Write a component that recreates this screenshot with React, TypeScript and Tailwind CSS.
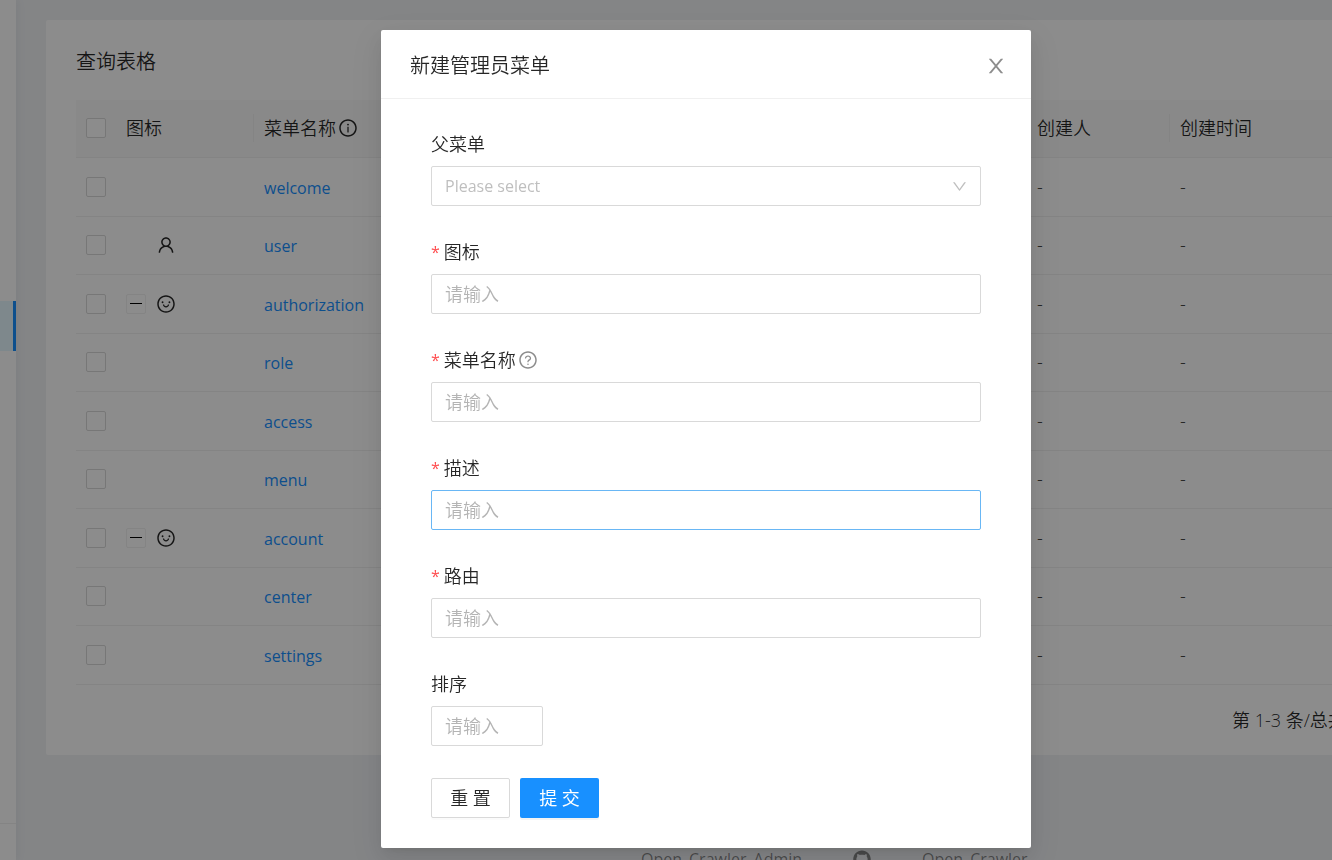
import { useState } from "react";
import {
  AiOutlineGithub,
  AiOutlineInfoCircle,
  AiOutlineQuestionCircle,
  AiOutlineSmile,
  AiOutlineUser,
} from "react-icons/ai";

type MenuRow = {
  name: string;
  icon?: "user" | "smile";
  expandable?: boolean;
};

const rows: MenuRow[] = [
  { name: "welcome" },
  { name: "user", icon: "user" },
  { name: "authorization", icon: "smile", expandable: true },
  { name: "role" },
  { name: "access" },
  { name: "menu" },
  { name: "account", icon: "smile", expandable: true },
  { name: "center" },
  { name: "settings" },
];

const checkboxClass =
  "block size-5 appearance-none rounded-xs border border-[#d9d9d9] bg-white checked:border-[#1890ff] checked:bg-[#1890ff]";

const inputClass =
  "h-10 rounded-xs border bg-white px-[13px] text-lg outline-none placeholder:text-[#b4b4b4] focus:border-[#69b7f5]";

function CloseIcon() {
  return (
    <svg viewBox="64 64 896 896" width="20" height="20" fill="currentColor" aria-hidden="true">
      <path d="M563.8 512l262.5-312.9c4.4-5.2.7-13.1-6.1-13.1h-79.8c-4.7 0-9.2 2.1-12.3 5.7L511.6 449.8 295.1 191.7c-3-3.6-7.5-5.7-12.3-5.7H203c-6.8 0-10.5 7.9-6.1 13.1L459.4 512 196.9 824.9A7.95 7.95 0 0 0 203 838h79.8c4.7 0 9.2-2.1 12.3-5.7l216.5-258.1 216.5 258.1c3 3.6 7.5 5.7 12.3 5.7h79.8c6.8 0 10.5-7.9 6.1-13.1L563.8 512z" />
    </svg>
  );
}

function DownIcon() {
  return (
    <svg viewBox="64 64 896 896" width="15" height="15" fill="currentColor" aria-hidden="true">
      <path d="M884 256h-75c-5.1 0-9.9 2.5-12.9 6.6L512 654.2 227.9 262.6c-3-4.1-7.8-6.6-12.9-6.6h-75c-6.5 0-10.3 7.4-6.5 12.7l352.6 486.1c12.8 17.6 39 17.6 51.7 0l352.6-486.1c3.9-5.3.1-12.7-6.4-12.7z" />
    </svg>
  );
}

function MenuTable() {
  return (
    <table className="w-full table-fixed border-collapse text-left">
      <colgroup>
        <col className="w-10" />
        <col className="w-[138px]" />
        <col />
        <col className="w-[143px]" />
        <col className="w-[162px]" />
      </colgroup>
      <thead>
        <tr className="h-[57px] border-b border-[#f0f0f0] bg-[#fafafa]">
          <th className="px-[10px]">
            <input type="checkbox" aria-label="全选" className={checkboxClass} />
          </th>
          <th className="font-[350]">
            <div className="flex h-7 items-center border-r border-[#f0f0f0] px-[10px]">图标</div>
          </th>
          <th className="font-[350]">
            <div className="flex h-7 items-center gap-0.5 border-r border-[#f0f0f0] px-[10px]">
              菜单名称
              <AiOutlineInfoCircle size={20} />
            </div>
          </th>
          <th className="font-[350]">
            <div className="flex h-7 items-center border-r border-[#f0f0f0] px-[10px]">创建人</div>
          </th>
          <th className="font-[350]">
            <div className="flex h-7 items-center px-[10px]">创建时间</div>
          </th>
        </tr>
      </thead>
      <tbody>
        {rows.map((row) => (
          <tr key={row.name} className="border-b border-[#f0f0f0] odd:h-[59px] even:h-[58px]">
            <td className="px-[10px]">
              <input type="checkbox" aria-label={row.name} className={checkboxClass} />
            </td>
            <td className="px-[10px]">
              <div className="flex items-center gap-[10px]">
                {row.expandable ? (
                  <button
                    type="button"
                    aria-label="收起"
                    className="flex size-5 items-center justify-center rounded-xs border border-[#f0f0f0]"
                  >
                    <span className="h-px w-3 bg-black" />
                  </button>
                ) : (
                  <span className="w-5" />
                )}
                {row.icon === "user" && <AiOutlineUser size={20} />}
                {row.icon === "smile" && <AiOutlineSmile size={20} />}
              </div>
            </td>
            <td className="px-[10px]">
              <a href="#" className="text-base font-normal text-[#1890ff]">
                {row.name}
              </a>
            </td>
            <td className="px-[10px]">-</td>
            <td className="px-[10px]">-</td>
          </tr>
        ))}
      </tbody>
    </table>
  );
}

type FieldProps = {
  id: string;
  label: string;
  required?: boolean;
  tip?: boolean;
  short?: boolean;
  active?: boolean;
};

function Field({ id, label, required, tip, short, active }: FieldProps) {
  const [value, setValue] = useState("");

  return (
    <div className="flex flex-col items-start">
      <label htmlFor={id} className="mb-2 flex h-7 items-center">
        {required && <span className="mr-1 text-base font-normal text-[#ff4d4f]">*</span>}
        {label}
        {tip && <AiOutlineQuestionCircle size={20} className="ml-0.5 text-black/45" />}
      </label>
      <input
        id={id}
        value={value}
        onChange={(e) => setValue(e.target.value)}
        placeholder="请输入"
        className={`${inputClass} ${active ? "border-[#69b7f5]" : "border-[#d9d9d9]"} ${short ? "w-28" : "w-full"}`}
      />
    </div>
  );
}

function CreateMenuModal() {
  return (
    <div className="fixed inset-0 flex items-start justify-center bg-black/45 pt-[30px] pl-20">
      <div
        role="dialog"
        aria-labelledby="modal-title"
        className="w-[650px] rounded-xs bg-white shadow-[0_4px_8px_-5px_rgba(0,0,0,0.12),0_8px_20px_0_rgba(0,0,0,0.08),0_11px_35px_10px_rgba(0,0,0,0.05)]"
      >
        <div className="flex h-[69px] items-center justify-between border-b border-[#f0f0f0] pt-1 pr-[25px] pl-[29px]">
          <h2 id="modal-title" className="text-xl font-[350]">
            新建管理员菜单
          </h2>
          <button type="button" aria-label="关闭" className="text-black/45 hover:text-black/75">
            <CloseIcon />
          </button>
        </div>
        <form className="px-[50px] pt-[31px] pb-[30px]" onSubmit={(e) => e.preventDefault()}>
          <div className="flex flex-col gap-8">
            <div className="flex flex-col">
              <label htmlFor="parent" className="mb-2 flex h-7 items-center">
                父菜单
              </label>
              <div className="relative">
                <select
                  id="parent"
                  className="block h-10 w-full appearance-none rounded-xs border border-[#d9d9d9] bg-white px-[13px] text-base font-normal text-[#bfbfbf] outline-none"
                >
                  <option>Please select</option>
                </select>
                <span className="pointer-events-none absolute inset-y-0 right-[14px] flex items-center text-[#bfbfbf]">
                  <DownIcon />
                </span>
              </div>
            </div>
            <Field id="icon" label="图标" required />
            <Field id="name" label="菜单名称" required tip />
            <Field id="desc" label="描述" required active />
            <Field id="path" label="路由" required />
            <Field id="sort" label="排序" short />
          </div>
          <div className="mt-8 flex gap-[10px]">
            <button
              type="reset"
              className="h-10 w-[79px] rounded-xs border border-[#d9d9d9] bg-white shadow-[0_2px_0_rgba(0,0,0,0.016)]"
            >
              重 置
            </button>
            <button
              type="submit"
              className="h-10 w-[79px] rounded-xs bg-[#1890ff] font-normal text-white shadow-[0_2px_0_rgba(0,0,0,0.045)]"
            >
              提 交
            </button>
          </div>
        </form>
      </div>
    </div>
  );
}

export default function App() {
  return (
    <div className="flex h-screen overflow-hidden bg-[#f0f2f5] font-['Open_Sans','Noto_Sans_CJK_SC',sans-serif] text-lg font-[350] text-black/85">
      <aside className="flex w-4 shrink-0 flex-col justify-between bg-white shadow-[2px_0_10px_0_rgba(29,35,41,0.05)]">
        <div className="mt-[301px] h-[50px] border-r-3 border-[#1890ff] bg-[#e6f7ff]" />
        <div className="h-[37px] border-t border-[#f0f0f0]" />
      </aside>
      <main className="min-w-0 flex-1 pt-5 pl-[30px]">
        <section className="rounded-l-xs bg-white pl-[30px]">
          <h1 className="flex h-20 items-center pt-1 text-xl">查询表格</h1>
          <MenuTable />
          <div className="flex h-[70px] items-center justify-end">
            <span className="w-[100px] overflow-hidden whitespace-nowrap">第 1-3 条/总共</span>
          </div>
        </section>
        <footer className="mt-[92px] ml-[595px] flex items-center gap-[50px] text-base font-normal whitespace-nowrap text-black/45">
          <a href="#">Open_Crawler_Admin</a>
          <a href="#" aria-label="GitHub">
            <AiOutlineGithub size={20} />
          </a>
          <a href="#">Open_Crawler</a>
        </footer>
      </main>
      <CreateMenuModal />
    </div>
  );
}
